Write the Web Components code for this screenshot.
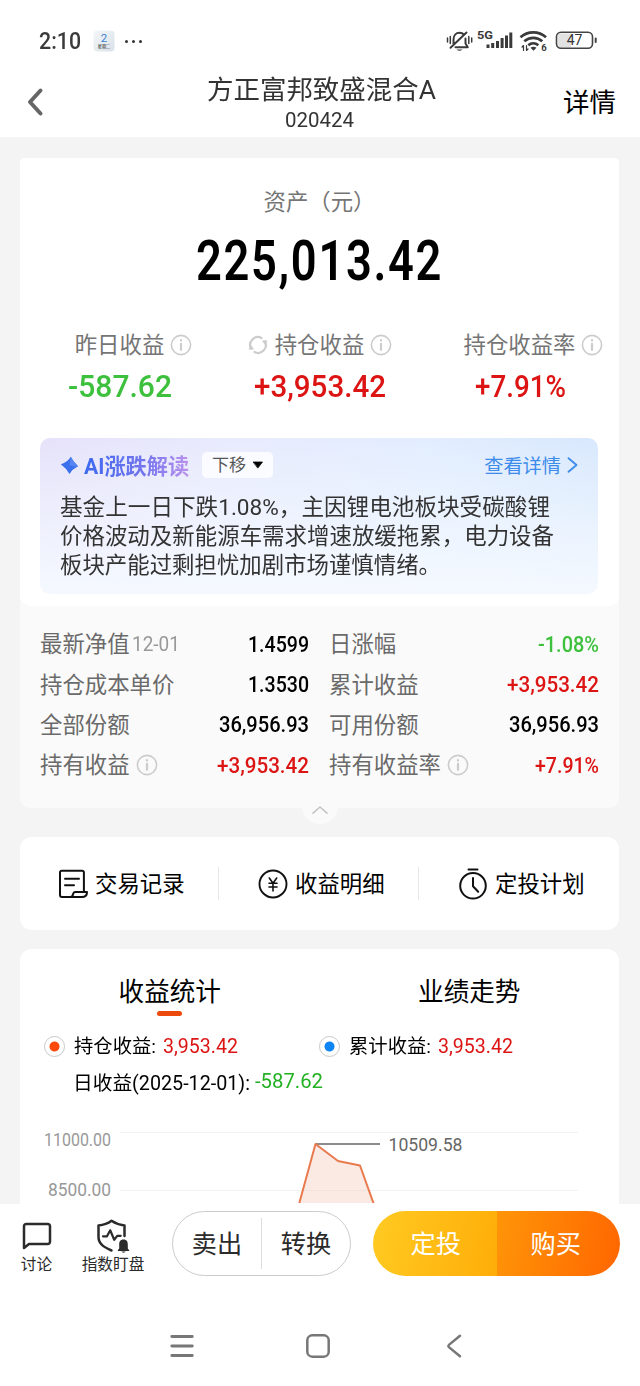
<!DOCTYPE html>
<html lang="zh-CN">
<head>
<meta charset="utf-8">
<title>方正富邦致盛混合A</title>
<style>
  html, body { margin: 0; }
  body {
    width: 640px;
    height: 1386px;
    overflow: hidden;
    background: #f4f4f4;
    color: #000;
    font-family: Roboto, "Noto Sans CJK SC", sans-serif;
    font-size: 22.4px;
  }
</style>
</head>
<body>
<fund-page></fund-page>

<script>
  function define(name, html, setup) {
    customElements.define(name, class extends HTMLElement {
      constructor() {
        super();
        this.attachShadow({ mode: 'open' });
      }
      connectedCallback() {
        this.shadowRoot.innerHTML = typeof html === 'function' ? html(this) : html;
        if (setup) setup(this);
      }
    });
  }

  /////////////////////////////////////////////////////////
  // Icons
  /////////////////////////////////////////////////////////
  const icons = {
    back: [18, 30, '<path d="M13.500 3.500 3 15l10.500 11.500" stroke="#666" stroke-width="4"/>'],
    info: [22, 22, '<g stroke="#ccc" stroke-width="1.600"><circle cx="11" cy="11" r="9.600"/><path d="M11 9.800v6M11 6v.6" stroke-width="2.200"/></g>'],
    refresh: [22, 22, '<g stroke="#ccc" stroke-width="2.200"><path d="M4 14.500A7.800 7.800 0 0 1 14.500 4M18 7.500A7.800 7.800 0 0 1 7.500 18"/><path d="M15 6.500h5.500l-2.800 4.300zM7 15.500H1.500l2.800-4.300z" fill="#ccc" stroke="none"/></g>'],
    star: [19, 19, '<path d="M10.800 .8Q13 5.500 18 10.300 12.500 13 9.500 18 6.500 12.500 .8 8.300 7.500 6.500 10.800 .8Z" fill="#3b70ed"/><path d="M10.800 .8Q13 5.500 18 10.300 13.500 11 9.500 9Z" fill="#5585f3"/>'],
    caret: [12, 8, '<path d="M1.500 1h9L6 6.800z" fill="#000" stroke="#000" stroke-width=".8"/>'],
    more: [12, 18, '<path d="M2.500 2.200 10.500 9l-8 6.800" stroke="#3d8bea" stroke-width="1.800"/>'],
    up: [18, 10, '<path d="M2 8.200 9 2l7 6.200" stroke="#c4c4c4" stroke-width="1.600"/>'],
    record: [30, 30, '<g stroke="#111" stroke-width="2"><path d="M12.500 28H4a2 2 0 0 1-2-2V3.500A1.700 1.700 0 0 1 3.700 1.800h20.500a1.700 1.700 0 0 1 1.700 1.700V22"/><path d="M12.500 28h11.500c3.200 0 5-2 5-5H17c-.9 0-1.300.6-1.700 1.500-.5 1.700-.8 3.500-2.800 3.500"/><path d="M7 9.800h14M7 16.300h9"/></g>'],
    yuan: [30, 30, '<g stroke="#111" stroke-width="1.900"><circle cx="15" cy="15" r="13.500"/><path d="m11.300 9 3.700 5.200L18.700 9M11 14.300h8M11 18h8M15 14.300v7.700" stroke-width="1.600"/></g>'],
    timer: [30, 32, '<g stroke="#111" stroke-width="2"><circle cx="15" cy="17.800" r="12.800"/><path d="M10.500 1.500h9M15 10v8.200l5.200 5.600"/></g>'],
    chat: [30, 29, '<path d="M2 26V4.200A2.200 2.200 0 0 1 4.200 2h21.600A2.200 2.200 0 0 1 28 4.200v15.600a2.200 2.200 0 0 1-2.200 2.200H7z" stroke="#2b2b2b" stroke-width="2.500"/>'],
    shield: [34, 34, '<g stroke="#2b2b2b" stroke-width="2.500"><path d="M15.500 31.500C8 28 2.500 25 2.500 18V6.500C8 6 12 4.500 15.500 1.800 19.500 4.500 23 6 28.500 6.500V17"/><path d="M7 17.300h4l3.200-6 4 9.500 3-4h3.500" stroke-width="2.200"/></g><path d="M27.500 20.500c-3.500 0-4.300 2.500-4.300 5v4l-1.400 1.800v.8h11.400v-.8L31.800 29.500v-4c0-2.500-.8-5-4.300-5zM25.500 32.600h4c-.3 1.400-3.700 1.400-4 0z" fill="#2b2b2b"/>'],
    menu: [24, 24, '<path d="M1.800 2.500h20.500M1.800 12h20.500M1.800 21.500h20.500" stroke="#777" stroke-width="2.800"/>'],
    home: [24, 24, '<rect x="1.300" y="1.300" width="21.400" height="21.400" rx="5" stroke="#777" stroke-width="2.500"/>'],
    prev: [16, 24, '<path d="M14 1.800 3.200 10.600q-1.700 1.400 0 2.800L14 22.200" stroke="#777" stroke-width="2.500"/>'],
    calendar: [22, 22, '<defs><linearGradient id="c" x2="1" y2="1"><stop stop-color="#f3f6f8"/><stop offset="1" stop-color="#d9e2e8"/></linearGradient></defs><rect x=".5" y=".5" width="21" height="21" rx="4" fill="url(#c)"/><text x="11" y="11.800" text-anchor="middle" font-size="11.500" fill="#3d7fd0">2</text><text x="11" y="18" text-anchor="middle" font-size="4.200" fill="#222">星期二</text>'],
    signals: [152, 24, `
      <g stroke="#3a3a3a" stroke-width="2">
        <path d="M7.500 15V10.500c0-4 2.500-6.800 6-6.800 2 0 3.500.8 4.500 2M4.500 18.800 20.500 3.500M19.500 9.500v5l2.300 3.700H9.500"/>
        <path d="M1.500 9v4M4.300 7.500v7M22.800 7.500v7M25.700 9v4" stroke-width="1.500"/>
      </g>
      <path d="M10.500 20.500h6q-3 2.600-6 0z" fill="#3a3a3a"/>
      <text x="31" y="9.800" font-size="11.500" font-weight="700" fill="#3a3a3a" textLength="16" lengthAdjust="spacingAndGlyphs">5G</text>
      <path d="M40.500 15.500h3V19h-3zM45.200 14h3v5h-3zM50 12h3v7h-3zM54.600 9h3v10h-3zM59 6.500h3V19h-3zM63.300 3.500h3V19h-3z" fill="#3a3a3a"/>
      <g stroke="#3a3a3a" stroke-width="2.700" stroke-linecap="butt">
        <path d="M74.500 8.200a19 19 0 0 1 25.500 0M78.300 12.300a13.500 13.500 0 0 1 18 0M82.300 16.200a8 8 0 0 1 10 0"/>
      </g>
      <path d="M84.500 18.800q3-2 6 0l-3 3z" fill="#3a3a3a"/>
      <path d="M77.500 21.500v-5L76 18M80.500 16.500v5L82 20" stroke="#3a3a3a" stroke-width="1.200"/>
      <text x="95.300" y="21.800" font-size="9.500" font-weight="700" fill="#3a3a3a">6</text>
      <path d="M114 4.500h11v14h-11a2 2 0 0 1-2-2v-10a2 2 0 0 1 2-2z" fill="#e2e2e2"/>
      <rect x="110.500" y="3.300" width="36" height="16" rx="4.500" stroke="#444" stroke-width="1.600"/>
      <path d="M149.700 9.500v3.500" stroke="#444" stroke-width="2"/>
      <text x="128.500" y="16.300" text-anchor="middle" font-size="14" fill="#333">47</text>`],
  };

  define('fund-icon', host => {
    const [w, h, body] = icons[host.getAttribute('name')];
    return `
      <style>
        :host { display: inline-block; flex: none; width: ${w}px; height: ${h}px; }
        svg { display: block; overflow: visible; }
      </style>
      <svg width="${w}" height="${h}" viewBox="0 0 ${w} ${h}" fill="none" stroke-linecap="round" stroke-linejoin="round">${body}</svg>`;
  });

  /////////////////////////////////////////////////////////
  // Top of the screen
  /////////////////////////////////////////////////////////
  define('status-bar', `
    <style>
      :host { display: flex; align-items: center; height: 44px; padding: 19px 42px 0 39px; background: #fff; }
      .time { font-size: 23.500px; font-weight: 500; color: #3a3a3a; line-height: 44px; }
      .cal { margin: 0 10px 0 12px; }
      .dots { display: flex; gap: 4px; flex: 1; }
      .dots i { width: 3px; height: 3px; border-radius: 50%; background: #333; }
    </style>
    <fit-text class="time" width="42">2:10</fit-text>
    <fund-icon class="cal" name="calendar"></fund-icon>
    <div class="dots"><i></i><i></i><i></i></div>
    <fund-icon name="signals"></fund-icon>
  `);

  define('nav-header', `
    <style>
      :host { display: flex; align-items: center; justify-content: space-between; height: 74px; padding: 0 24px 0 27px; background: #fff; }
      .side { display: flex; width: 54px; padding-top: 3px; }
      .end { font-size: 26.500px; justify-content: flex-end; white-space: nowrap; padding-top: 1px; }
      .mid { text-align: center; color: #333; line-height: 30px; padding: 10px 5px 0 0; }
      .title { font-size: 26px; }
      .code { font-size: 20px; }
    </style>
    <div class="side"><fund-icon name="back"></fund-icon></div>
    <div class="mid">
      <div class="title"><fit-text width="229">方正富邦致盛混合A</fit-text></div>
      <div class="code"><fit-text width="69"><slot name="code"></slot></fit-text></div>
    </div>
    <div class="side end">详情</div>
  `);

  /////////////////////////////////////////////////////////
  // Asset card
  /////////////////////////////////////////////////////////
  define('gain-figure', host => `
    <style>
      :host { display: block; width: 200px; text-align: center; }
      .label { display: flex; justify-content: center; align-items: center; gap: 6px; padding-right: 1px; color: #757575; line-height: 29px; }
      .label span { margin: 1px 0 -1px; }
      .info { margin-right: -28px; }
      .refresh { margin-left: -28px; }
      .value { font-size: 31.500px; font-weight: 500; line-height: 40px; margin-top: 8px; }
    </style>
    <div class="label">
      ${host.hasAttribute('refresh') ? '<fund-icon class="refresh" name="refresh"></fund-icon>' : ''}
      <span>${host.getAttribute('label')}</span>
      <fund-icon class="info" name="info"></fund-icon>
    </div>
    <div class="value"><fit-text width="${host.getAttribute('width')}"><slot></slot></fit-text></div>
  `);

  define('ai-note', `
    <style>
      :host {
        display: block; height: 156px; box-sizing: border-box; margin: 0 21px 0 20px; padding: 11px 20px 0 20px;
        border-radius: 10px; color: #333;
        background: linear-gradient(180deg, rgba(244,249,255,0) 0%, rgba(244,249,255,.55) 50%, #f5f9ff 100%),
          linear-gradient(90deg, #e6e2fa 0%, #e8ebfd 35%, #e2edff 70%, #d8e8fd 100%);
      }
      .head { display: flex; align-items: center; height: 32px; }
      .name {
        margin: 3px 13px 0 5px; width: 105px; font-size: 21.200px; font-weight: 700; line-height: 30px; white-space: nowrap;
        background: linear-gradient(90deg, #3c69ee, #7776ee 60%, #bb92ec); -webkit-background-clip: text; background-clip: text; color: transparent;
      }
      .move {
        display: flex; align-items: center; gap: 6px; width: 71px; height: 26px; box-sizing: border-box; padding-left: 10px;
        margin-bottom: 1px; border-radius: 5px; background: rgba(255,255,255,.8); font-size: 17px; line-height: 24px; color: #555;
      }
      .link { display: flex; align-items: center; gap: 5px; margin-left: auto; color: #3d8bea; font-size: 19.200px; }
      p { margin: 12px 0 0; line-height: 29px; white-space: nowrap; }
      ::slotted(*) { display: block; }
    </style>
    <div class="head">
      <fund-icon name="star"></fund-icon>
      <span class="name">AI涨跌解读</span>
      <div class="move">下移<fund-icon name="caret"></fund-icon></div>
      <div class="link">查看详情<fund-icon name="more"></fund-icon></div>
    </div>
    <p><slot></slot></p>
  `);

  const details = [
    ['最新净值', '1.4599', 61, '', '12-01'],
    ['日涨幅', '-1.08%', 61, 'down'],
    ['持仓成本单价', '1.3530', 61],
    ['累计收益', '+3,953.42', 92, 'up'],
    ['全部份额', '36,956.93', 90],
    ['可用份额', '36,956.93', 90],
    ['持有收益', '+3,953.42', 92, 'up', 'info'],
    ['持有收益率', '+7.91%', 64, 'up', 'info'],
  ];

  define('holding-details', `
    <style>
      :host {
        display: grid; grid-template-columns: 269px 270px; column-gap: 20px; grid-auto-rows: 40.400px;
        height: 202px; box-sizing: border-box; padding: 18px 20px 0; color: #6a6a6a;
      }
      div { display: flex; align-items: center; white-space: nowrap; }
      .label { line-height: 26px; }
      small { font-size: 20px; color: #999; margin-left: 2px; }
      fund-icon { margin-left: 6px; }
      .value { margin-left: auto; font-size: 22px; font-weight: 500; color: #000; }
      .up { color: #dc1414; }
      .down { color: #3dc13d; }
    </style>
    ${details.map(([label, value, width, tone = '', extra]) => `
      <div>
        <span class="label">${label}</span>${extra === 'info' ? '<fund-icon name="info"></fund-icon>' : extra ? `<small><fit-text width="48">${extra}</fit-text></small>` : ''}
        <fit-text class="value ${tone}" width="${width}">${value}</fit-text>
      </div>`).join('')}
  `);

  define('asset-card', `
    <style>
      :host { display: block; height: 650px; margin: 21px 21px 0 20px; border-radius: 5px 5px 10px 10px; background: #fafafa; }
      .top { height: 448px; border-radius: 5px 5px 10px 10px; background: #fff; }
      .caption { padding-top: 29px; text-align: center; line-height: 30px; color: #757575; }
      .total { text-align: center; font-size: 55px; font-weight: 600; line-height: 60px; margin-top: 14px; letter-spacing: 2px; }
      .row { display: grid; grid-template-columns: 200px 200px 199px; margin: 39px 0 31px; }
      .up { color: #dc1414; }
      .down { color: #3dc13d; }
      .fold { display: flex; align-items: center; justify-content: center; width: 36px; height: 36px; margin: -20px auto 0; border-radius: 50%; background: #fafafa; }
      .fold fund-icon { margin-top: 8px; }
    </style>
    <div class="top">
      <div class="caption">资产（元）</div>
      <div class="total"><fit-text width="247">225,013.42</fit-text></div>
      <div class="row">
        <gain-figure class="down" label="昨日收益" width="104">-587.62</gain-figure>
        <gain-figure class="up" label="持仓收益" width="132" refresh>+3,953.42</gain-figure>
        <gain-figure class="up" label="持仓收益率" width="91">+7.91%</gain-figure>
      </div>
      <ai-note>
        <fit-text width="490">基金上一日下跌1.08%，主因锂电池板块受碳酸锂</fit-text>
        <fit-text width="494">价格波动及新能源车需求增速放缓拖累，电力设备</fit-text>
        <fit-text width="381">板块产能过剩担忧加剧市场谨慎情绪。</fit-text>
      </ai-note>
    </div>
    <holding-details></holding-details>
    <div class="fold"><fund-icon name="up"></fund-icon></div>
  `);

  /////////////////////////////////////////////////////////
  // Shortcuts
  /////////////////////////////////////////////////////////
  define('quick-links', `
    <style>
      :host { display: grid; grid-template-columns: 198px 200px 201px; align-items: center; height: 93px; margin: 29px 21px 0 20px; border-radius: 12px; background: #fff; }
      div { display: flex; align-items: center; gap: 7px; height: 33px; padding-left: 39px; border-left: 1px solid #e8e8e8; }
      div:first-of-type { border: 0; padding-left: 38px; }
      span { line-height: 26px; margin-top: 1px; }
    </style>
    <div><fund-icon name="record"></fund-icon><span>交易记录</span></div>
    <div><fund-icon name="yuan"></fund-icon><span>收益明细</span></div>
    <div><fund-icon name="timer"></fund-icon><span>定投计划</span></div>
  `);

  /////////////////////////////////////////////////////////
  // Profit statistics
  /////////////////////////////////////////////////////////
  define('profit-legend', host => `
    <style>
      :host { display: flex; align-items: center; font-size: 19.200px; line-height: 30px; white-space: nowrap; }
      i { width: 19px; height: 19px; margin-right: 9px; border: 1px solid #c9c9c9; border-radius: 50%; background: radial-gradient(circle, ${host.getAttribute('color')} 4.600px, transparent 5.400px); }
      fit-text { margin-top: 2px; }
      .value { margin: 0 0 0 7px; color: #dc1414; font-size: 20.800px; }
    </style>
    <i></i><fit-text width="82"><slot></slot>:</fit-text>
    <fit-text class="value" width="75">3,953.42</fit-text>
  `);

  define('profit-chart', `
    <style>
      :host { display: block; height: 84px; }
      svg { display: block; }
    </style>
    <svg width="599" height="84" viewBox="20 1119 599 84">
      <path d="M120 1132.500h458M120 1190.500h458" stroke="#f2f2f2"/>
      <path d="M298.500 1206 315.500 1144 338 1161 360 1165.500 374.500 1206z" fill="#fbe9e4"/>
      <path d="M303 1190.500h65" stroke="#f3e2dd"/>
      <path d="M316 1144h64" stroke="#666" stroke-width="1.600"/>
      <path d="M298.500 1206 315.500 1144 338 1161 360 1165.500 374.500 1206" fill="none" stroke="#e87a4e" stroke-width="2" stroke-linejoin="round"/>
      <g font-size="17.500" fill="#999">
        <text x="44" y="1145.500" textLength="67" lengthAdjust="spacingAndGlyphs">11000.00</text>
        <text x="48" y="1196" textLength="63" lengthAdjust="spacingAndGlyphs">8500.00</text>
      </g>
      <text x="388.500" y="1151" font-size="18.500" fill="#666" textLength="74" lengthAdjust="spacingAndGlyphs">10509.58</text>
    </svg>
  `);

  define('profit-card', `
    <style>
      :host { display: block; height: 255px; margin: 19px 21px 0 20px; border-radius: 12px 12px 0 0; background: #fff; overflow: hidden; }
      .tabs { display: grid; grid-template-columns: 1fr 1fr; padding-top: 25px; font-size: 25.600px; line-height: 36px; text-align: center; }
      .on::after { content: ""; display: block; width: 25px; height: 5px; margin: 1px auto 0; border-radius: 3px; background: #ec4a0c; }
      .legend { display: grid; grid-template-columns: 275px 275px; height: 30px; margin: 14px 0 0 24px; }
      .day { display: flex; align-items: center; height: 30px; margin: 6px 0 23px 53px; font-size: 19.500px; }
      .day .down { margin-left: 5px; color: #22b122; font-size: 20.800px; }
    </style>
    <div class="tabs"><div class="on">收益统计</div><div>业绩走势</div></div>
    <div class="legend">
      <profit-legend color="#fb4a0a">持仓收益</profit-legend>
      <profit-legend color="#0e84f5">累计收益</profit-legend>
    </div>
    <div class="day">
      <fit-text width="177">日收益(2025-12-01):</fit-text>
      <fit-text class="down" width="68">-587.62</fit-text>
    </div>
    <profit-chart></profit-chart>
  `);

  /////////////////////////////////////////////////////////
  // Bottom of the screen
  /////////////////////////////////////////////////////////
  define('trade-bar', `
    <style>
      :host { display: flex; align-items: flex-start; height: 101px; padding: 7px 20px 0; box-sizing: border-box; background: #fff; color: #2b2b2b; }
      .tool { display: flex; flex-direction: column; align-items: center; font-size: 15.700px; line-height: 21px; white-space: nowrap; }
      .talk { width: 33px; }
      .talk fund-icon { height: 32px; padding-top: 10px; }
      .talk, .watch { padding-top: 1px; }
      .watch { width: 64px; margin-left: 28px; }
      .watch fund-icon { height: 35px; padding-top: 7px; }
      .pill { display: flex; align-items: center; height: 65px; box-sizing: border-box; border-radius: 33px; font-size: 25.200px; text-align: center; overflow: hidden; }
      .plain { width: 179px; margin-left: 27px; border: 1px solid #ccc; }
      .plain div { flex: 1; padding-top: 2px; line-height: 49px; }
      .plain div + div { border-left: 1px solid #ddd; }
      .fill { width: 247px; margin-left: 22px; color: #fff; }
      .fill div { width: 124px; height: 65px; line-height: 68px; box-sizing: border-box; }
      .auto { padding-left: 2px; background: linear-gradient(100deg, #ffca22, #ffad08); }
      .buy { padding-right: 5px; background: linear-gradient(100deg, #ff9508, #ff6600); }
    </style>
    <div class="tool talk"><fund-icon name="chat"></fund-icon>讨论</div>
    <div class="tool watch"><fund-icon name="shield"></fund-icon>指数盯盘</div>
    <div class="pill plain"><div>卖出</div><div>转换</div></div>
    <div class="pill fill"><div class="auto">定投</div><div class="buy">购买</div></div>
  `);

  define('system-nav', `
    <style>
      :host { display: flex; align-items: center; height: 81px; padding-left: 170px; background: #fff; }
      [name=home] { margin: 0 116px 0 112px; }
    </style>
    <fund-icon name="menu"></fund-icon>
    <fund-icon name="home"></fund-icon>
    <fund-icon name="prev"></fund-icon>
  `);

  define('fund-page', `
    <style>
      :host { display: flex; flex-direction: column; height: 1386px; }
      asset-card, quick-links, profit-card { flex: none; }
    </style>
    <status-bar></status-bar>
    <nav-header><span slot="code">020424</span></nav-header>
    <asset-card></asset-card>
    <quick-links></quick-links>
    <profit-card></profit-card>
    <trade-bar></trade-bar>
    <system-nav></system-nav>
  `);

  // Squeezes its text to the given width. Defined last, so that all the
  // text it measures is already laid out.
  define('fit-text', `
    <style>
      :host { display: inline-block; white-space: nowrap; }
      span { display: inline-block; transform-origin: 0 50%; }
    </style>
    <span><slot></slot></span>
  `, host => {
    const width = Number(host.getAttribute('width'));
    const span = host.shadowRoot.querySelector('span');
    const natural = span.getBoundingClientRect().width;
    host.style.width = width + 'px';
    if (natural) span.style.transform = `scaleX(${width / natural})`;
  });
</script>
</body>
</html>
